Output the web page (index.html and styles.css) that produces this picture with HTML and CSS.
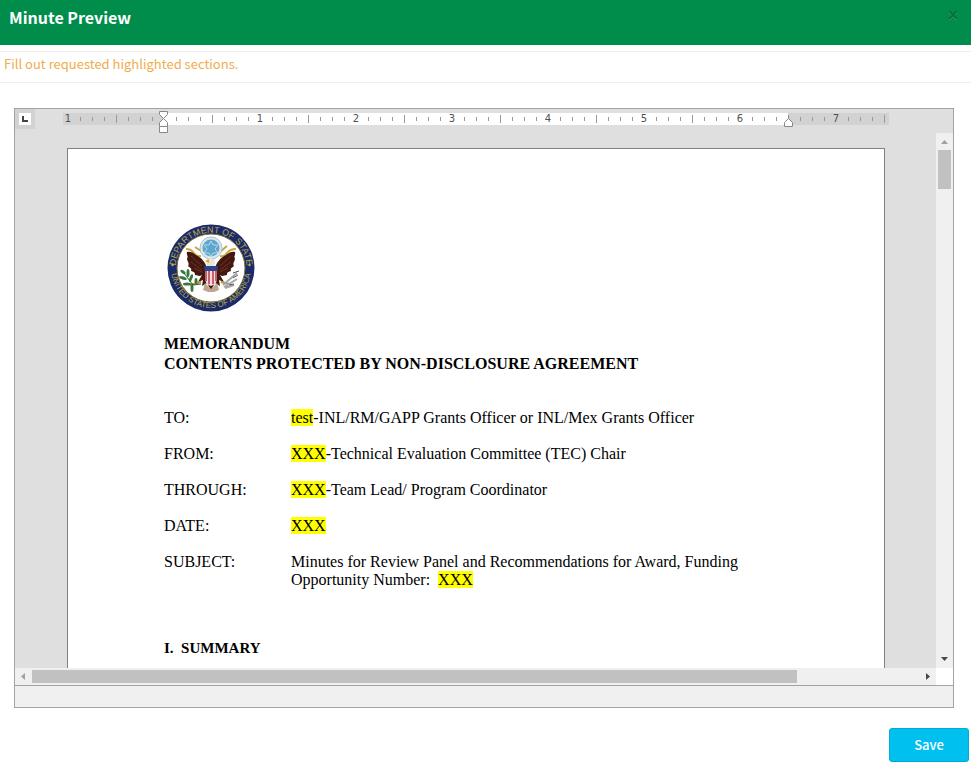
FILE: index.html
```html
<!DOCTYPE html>
<html lang="en">
<head>
<meta charset="utf-8">
<title>Minute Preview</title>
<link rel="stylesheet" href="styles.css">
</head>
<body>
<header class="titlebar">
  <h1 class="title">Minute Preview</h1>
  <button class="close" type="button" aria-label="Close">
    <svg width="12" height="12" viewBox="0 0 12 12"><path d="M2 3l8 8M10 3l-8 8" stroke="#2ba063" stroke-width="2"/><path d="M2 2l8 8M10 2l-8 8" stroke="#07703e" stroke-width="2"/></svg>
  </button>
</header>
<p class="notice">Fill out requested highlighted sections.</p>
<main class="editor">
  <div class="ruler-row">
    <button class="tab-kind" type="button" aria-label="Left tab">
      <svg width="12" height="12" viewBox="0 0 12 12"><path fill="#fff" d="M0 0h12v12H0z"/><path d="M4 3v5h5" fill="none" stroke="#444" stroke-width="2"/></svg>
    </button>
    <svg class="ruler" width="826" height="24" viewBox="0 0 826 24" shape-rendering="crispEdges">
      <defs>
        <pattern id="ticks" x="5" y="0" width="96" height="12" patternUnits="userSpaceOnUse">
          <path d="M12 4h1v4h-1zM24 4h1v4h-1zM36 4h1v4h-1zM48 2h1v8h-1zM60 4h1v4h-1zM72 4h1v4h-1zM84 4h1v4h-1z" fill="#999"/>
        </pattern>
      </defs>
      <path fill="#d2d2d2" d="M0 0h826v12H0z"/>
      <path fill="#fff" d="M100 0h625v12H100z"/>
      <path fill="url(#ticks)" d="M0 0h826v12H0z"/>
      <g class="ruler-num">
        <text x="5" y="9">1</text><text x="197" y="9">1</text><text x="293" y="9">2</text><text x="389" y="9">3</text><text x="485" y="9">4</text><text x="581" y="9">5</text><text x="677" y="9">6</text><text x="773" y="9">7</text>
      </g>
      <g fill="#fff" stroke="#888" shape-rendering="auto">
        <path d="M96.500 -1.500h8v3l-4 4l-4 -4z"/>
        <path d="M96.500 13.500v-4l4 -4l4 4v4z"/>
        <path d="M96.500 13.500h8v6h-8z"/>
        <path d="M721.500 13.500v-4l4 -4l4 4v4z"/>
        <path d="M725.500 2v4"/>
      </g>
    </svg>
  </div>
  <div class="workspace">
    <div class="canvas">
      <article class="page">
        <svg class="seal" width="88" height="88" viewBox="0 0 88 88" role="img" aria-label="Department of State seal">
          <defs>
            <path id="arc-top" d="M10.500 56A35.500 35.500 0 1 1 77.500 56"/>
            <path id="arc-bottom" d="M4.200 40A40 40 0 1 0 83.800 40"/>
          </defs>
          <circle cx="44" cy="44" r="43.500" fill="#1b2a68"/>
          <circle cx="44" cy="44" r="34" fill="#fff" stroke="#81763c" stroke-width="1"/>
          <g class="seal-text">
            <text><textPath href="#arc-top" startOffset="50%" text-anchor="middle">DEPARTMENT OF STATE</textPath></text>
            <text class="seal-lower"><textPath href="#arc-bottom" startOffset="50%" text-anchor="middle">UNITED STATES OF AMERICA</textPath></text>
          </g>
          <g fill="#c9b13f"><circle cx="5.500" cy="41" r="1.200"/><circle cx="82.500" cy="41" r="1.200"/></g>
          <path d="M19 25q5 0 7 3q3 5 8 4M69 25q-6 0-9 4q-2 4-7 3M28 23l6 4M60 22l-6 5" fill="none" stroke="#c8a83d" stroke-width="2"/>
          <circle cx="44" cy="24" r="11" fill="#dbe8ee" stroke="#aac2ce" stroke-width="1"/>
          <circle cx="44" cy="24" r="8.500" fill="#5fa6cc"/>
          <path d="M44 17l2 4h5l-3 4l3 4h-5l-2 4l-2-4h-5l3-4l-3-4h5z" fill="none" stroke="#b3d8eb" stroke-width="1"/>
          <path d="M40 44C38 38 35 34 29 31C26 28 22 27 20 28C19 31 22 33 20 34C20 38 23 39 21 42C23 44 25 44 24 47C27 48 28 48 28 51C31 51 32 53 35 51L31 58L36 56L35 62L40 59L44 66L48 59L53 62L52 56L57 58L53 51C56 53 57 51 60 51C60 48 61 48 64 47C63 44 65 44 67 42C65 39 68 38 68 34C66 33 69 31 68 28C66 27 62 28 59 31C53 34 50 38 48 44Z" fill="#43180f"/>
          <path d="M24 32l11 10M24 38l11 8M27 44l8 4M64 32L53 42M64 38l-11 8M61 44l-8 4" stroke="#6b3427" stroke-width="1"/>
          <path d="M38 59l6 6l6-6l2 7l-5 2h-6l-5-2z" fill="#bda590"/>
          <path d="M41 44l-2-6q0-4 4-4q5 0 5 4l-1 6z" fill="#e9e4d6"/>
          <path d="M38 37l4-2v4z" fill="#d7a834"/>
          <path d="M38 43h12v12q0 5-6 7q-6-2-6-7z" fill="#f2dcdc"/>
          <path d="M39 47v10M42 47v13M46 47v13M49 47v10" stroke="#b83a49" stroke-width="1.500"/>
          <path d="M37.500 42h13v5h-13z" fill="#2d4591"/>
          <path d="M34 58l-11 3M54 58l8 2" stroke="#bf9232" stroke-width="2"/>
          <g fill="#34793c"><ellipse cx="16" cy="48" rx="3" ry="1.500" transform="rotate(35 16 48)"/><ellipse cx="21" cy="49" rx="1.500" ry="4"/><ellipse cx="16" cy="54" rx="4" ry="1.500" transform="rotate(20 16 54)"/><ellipse cx="24" cy="54" rx="1.500" ry="4" transform="rotate(20 24 54)"/><ellipse cx="20" cy="60" rx="4" ry="1.500"/><ellipse cx="25" cy="64" rx="1.500" ry="4"/><ellipse cx="29" cy="57" rx="1.500" ry="3"/></g>
          <path d="M17 49l9 12l8-1" fill="none" stroke="#285f31" stroke-width="1"/>
          <path d="M56 61l14-12M57 63l13-8M58 64l9-3" stroke="#a3a7a6" stroke-width="2"/>
          <path d="M66 49l6-2M66 54l5-3M62 61l5-1" stroke="#555" stroke-width="1"/>
        </svg>
        <h2 class="doc-head">MEMORANDUM<br>CONTENTS PROTECTED BY NON-DISCLOSURE AGREEMENT</h2>
        <dl class="memo">
          <dt>TO:</dt><dd><mark>test</mark>-INL/RM/GAPP Grants Officer or INL/Mex Grants Officer</dd>
          <dt>FROM:</dt><dd><mark>XXX</mark>-Technical Evaluation Committee (TEC) Chair</dd>
          <dt>THROUGH:</dt><dd><mark>XXX</mark>-Team Lead/ Program Coordinator</dd>
          <dt>DATE:</dt><dd><mark>XXX</mark></dd>
          <dt>SUBJECT:</dt><dd>Minutes for Review Panel and Recommendations for Award, Funding Opportunity Number:&nbsp; <mark>XXX</mark></dd>
        </dl>
        <h3 class="section">I.&nbsp; SUMMARY</h3>
      </article>
    </div>
    <div class="vbar">
      <svg width="17" height="17" viewBox="0 0 17 17"><path d="M5 11l3.500-4l3.500 4z" fill="#a0a0a0"/></svg>
      <div class="vthumb"></div>
      <svg class="end-y" width="17" height="17" viewBox="0 0 17 17"><path d="M5 6l3.500 4l3.500-4z" fill="#484848"/></svg>
    </div>
    <div class="hbar">
      <svg width="17" height="17" viewBox="0 0 17 17"><path d="M10 5l-4 3.500l4 3.500z" fill="#a0a0a0"/></svg>
      <div class="htrack"><div class="hthumb"></div></div>
      <svg width="17" height="17" viewBox="0 0 17 17"><path d="M7 5l4 3.500l-4 3.500z" fill="#484848"/></svg>
    </div>
  </div>
  <div class="status"></div>
</main>
<footer class="actions"><button class="save" type="button">Save</button></footer>
</body>
</html>
```

FILE: styles.css
```css
* { box-sizing: border-box; }
body {
  margin: 0;
  background: #fff;
  font-family: "Noto Sans CJK SC", "Noto Sans", sans-serif;
}
button { border: 0; padding: 0; font: inherit; cursor: pointer; }
svg { display: block; flex: none; }
.titlebar {
  display: flex;
  justify-content: space-between;
  align-items: flex-start;
  height: 45px;
  padding: 7px 12px 0 9px;
  background: #008d4c;
}
.title { margin: 0; color: #fff; font-size: 16px; line-height: 20px; font-weight: 700; }
.close { margin-top: 2px; background: none; }
.notice {
  margin: 6px 0 0;
  padding: 2px 4px 8px;
  border: solid #eee;
  border-width: 1px 0;
  color: #f0ad4e;
  font-size: 13px;
  line-height: 20px;
}
.editor { margin: 25px 17px 0 14px; border: 1px solid #a3a3a3; background: #dfdfdf; }
.ruler-row { display: flex; height: 24px; overflow: hidden; }
.tab-kind { flex: none; width: 20px; height: 20px; padding: 4px; background: #d2d2d2; }
.ruler { margin: 4px 0 0 28px; overflow: visible; }
.ruler-num { font: 10px "DejaVu Sans", sans-serif; fill: #505050; text-anchor: middle; }
.workspace { display: grid; grid-template-columns: minmax(0, 1fr) 17px; background: #fff; }
.canvas { height: 535px; overflow: hidden; padding: 15px 52px 0; background: #dfdfdf; }
.page {
  width: 818px;
  min-height: 1056px;
  padding: 75px 96px;
  border: 1px solid #808080;
  background: #fff;
  color: #000;
  font: 16px/18px "Liberation Serif", serif;
}
.seal { margin-left: 3px; overflow: visible; }
.seal-text { font: 9px "Liberation Sans", sans-serif; fill: #b9a94b; }
.seal-lower { font-size: 8px; }
.doc-head { margin: 22px 0 0; font-size: 16px; line-height: 20px; font-weight: 700; }
.memo { display: grid; grid-template-columns: 127px minmax(0, 460px); row-gap: 18px; margin: 35px 0 0; }
.memo dd { margin: 0; }
mark { background: #ff0; color: #000; }
.section { margin: 50px 0 0; font-size: 15px; line-height: 18px; font-weight: 700; }
.vbar { display: flex; flex-direction: column; background: #f0f0f0; }
.vthumb { height: 39px; margin: 0 2px; background: #c1c1c1; }
.end-y { margin-top: auto; }
.hbar { display: flex; background: #f0f0f0; }
.htrack { display: grid; flex: 1; grid-template-columns: 765fr 122fr; padding: 2px 0; }
.hthumb { height: 13px; background: #c1c1c1; }
.status { height: 22px; border-top: 1px solid #a3a3a3; background: #f0f0f0; }
.actions { display: flex; justify-content: flex-end; padding: 20px 2px 0; }
.save {
  width: 80px;
  height: 34px;
  border: 1px solid #00acd6;
  border-radius: 3px;
  background: #00c0ef;
  color: #fff;
  font-size: 13px;
  line-height: 20px;
  font-weight: 500;
}
```
